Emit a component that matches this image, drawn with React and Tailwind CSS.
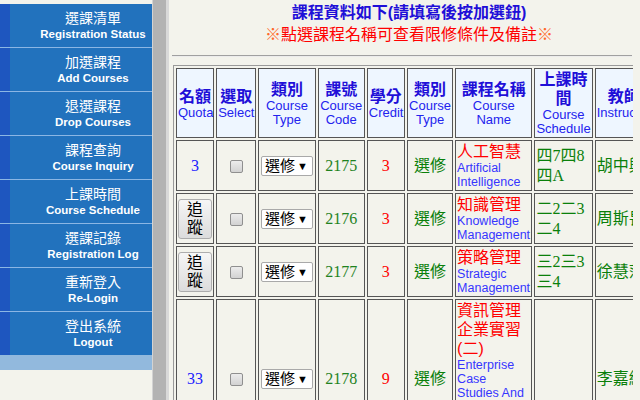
import React from 'react';

const menu = [
  ['選課清單', 'Registration Status'],
  ['加選課程', 'Add Courses'],
  ['退選課程', 'Drop Courses'],
  ['課程查詢', 'Course Inquiry'],
  ['上課時間', 'Course Schedule'],
  ['選課記錄', 'Registration Log'],
  ['重新登入', 'Re-Login'],
  ['登出系統', 'Logout'],
];

const heads = [
  { zh: '名額', en: ['Quota'], w: 'w-[38px]' },
  { zh: '選取', en: ['Select'], w: 'w-[40px]' },
  { zh: '類別', en: ['Course', 'Type'], w: 'w-[57px]' },
  { zh: '課號', en: ['Course', 'Code'], w: 'w-[47px]' },
  { zh: '學分', en: ['Credit'], w: 'w-[38px]' },
  { zh: '類別', en: ['Course', 'Type'], w: 'w-[46px]' },
  { zh: '課程名稱', en: ['Course', 'Name'], w: 'w-[77px]' },
  { zh: '上課時間', en: ['Course', 'Schedule'], w: 'w-[58px]' },
  { zh: '教師', en: ['Instructor'], w: 'w-[58px]' },
];

const courses = [
  {
    quota: '3', track: false, code: '2175', credit: '3',
    zh: ['人工智慧'], en: 'Artificial Intelligence',
    time: '四7四8四A', teacher: '胡中興',
  },
  {
    quota: null, track: true, code: '2176', credit: '3',
    zh: ['知識管理'], en: 'Knowledge Management',
    time: '二2二3二4', teacher: '周斯畏',
  },
  {
    quota: null, track: true, code: '2177', credit: '3',
    zh: ['策略管理'], en: 'Strategic Management',
    time: '三2三3三4', teacher: '徐慧萍',
  },
  {
    quota: '33', track: false, code: '2178', credit: '9',
    zh: ['資訊管理', '企業實習', '(二)'], en: 'Enterprise Case Studies And Practice in Information Management (II)',
    time: '', teacher: '李嘉紘',
  },
];

const sans = 'font-["Liberation_Sans","Noto_Sans_CJK_TC",sans-serif]';
const serif = 'font-["Liberation_Serif","Noto_Sans_CJK_TC",serif]';

const td = 'border border-[#555] p-[1px] align-middle';

function Checkbox() {
  return (
    <span className="inline-block h-[13px] w-[13px] rounded-[2px] border border-[#8f8f8f] bg-gradient-to-b from-[#ececec] to-[#d2d2d2] align-middle" />
  );
}

function TypeSelect() {
  return (
    <div className="mx-auto flex h-[20px] w-[52px] items-center rounded-[2px] border border-[#a9a9a9] bg-white pl-[3px] text-[15px] leading-[18px] text-black">
      <span>選修</span>
      <span className="ml-auto mr-[4px] text-[11px]">▼</span>
    </div>
  );
}

function TrackButton() {
  return (
    <div className="mx-auto flex h-[40px] w-[34px] flex-col items-center justify-center rounded-[3px] border border-[#adadad] bg-gradient-to-b from-[#f6f6f6] to-[#dcdcdc] text-[16px] leading-[18px] text-black">
      <span>追</span>
      <span>蹤</span>
    </div>
  );
}

export default function App() {
  return (
    <div className={`flex h-[400px] w-[640px] overflow-hidden bg-[#f3f3ec] ${sans}`}>
      {/* left menu */}
      <div className="flex w-[152px] shrink-0 flex-col pt-[4px]">
        {menu.map(([zh, en], i) => (
          <div
            key={en}
            className={`flex ${i < menu.length - 1 ? 'h-[44px] border-b border-[#8bb6e4]' : 'h-[43px]'}`}
          >
            <div className="w-[10px] bg-[#1e56bf]" />
            <div className="flex flex-1 flex-col items-center justify-center bg-[#2272bd] pl-[24px] text-white">
              <span className="text-[14px] leading-[17px]">{zh}</span>
              <span className="text-[11.5px] font-bold leading-[14px]">{en}</span>
            </div>
          </div>
        ))}
        <div className="h-[15px] bg-[#92b9dd]" />
      </div>

      {/* frame divider */}
      <div className="w-px shrink-0 bg-[#d3d3d3]" />
      <div className="w-[13px] shrink-0 bg-[#b3b3b3]" />
      <div className="w-[3px] shrink-0 bg-[#d9d9d9]" />

      {/* main */}
      <div className="w-[464px] shrink-0 overflow-hidden">
        <div className="w-[480px]">
          <p className="mt-[2px] text-center text-[16px] font-bold leading-[22px] text-[#1f0fd8]">
            課程資料如下(請填寫後按加選鈕)
          </p>
          <p className="text-center text-[16px] leading-[22px] text-[#ff0000]">
            <span className="text-[#ff6a2a]">※</span>點選課程名稱可查看限修條件及備註<span className="text-[#ff6a2a]">※</span>
          </p>
          <div className="ml-[3px] mt-[9px] w-[460px] border-b border-t border-b-[#ececec] border-t-[#a0a0a0]" />

          <table className="ml-[4px] mt-[8px] w-[483px] table-fixed border-separate border-spacing-[2px] border border-[#9a9a9a]">
            <thead>
              <tr>
                {heads.map((h, i) => (
                  <th key={i} className={`${h.w} ${td} bg-[#eef6ff] text-center font-normal`}>
                    <div className="text-[16px] font-bold leading-[19px] text-[#1f0fd8]">{h.zh}</div>
                    {h.en.map((e) => (
                      <div key={e} className="text-[13px] leading-[14px] text-[#2323ee]">{e}</div>
                    ))}
                  </th>
                ))}
              </tr>
            </thead>
            <tbody>
              {courses.map((c) => (
                <tr key={c.code}>
                  <td className={`${td} text-center ${serif} text-[16px] text-[#1a1aff]`}>
                    {c.track ? <TrackButton /> : c.quota}
                  </td>
                  <td className={`${td} text-center`}>
                    <Checkbox />
                  </td>
                  <td className={td}>
                    <TypeSelect />
                  </td>
                  <td className={`${td} text-center ${serif} text-[16px] text-[#1f821f]`}>{c.code}</td>
                  <td className={`${td} text-center ${serif} text-[16px] text-[#ff0000]`}>{c.credit}</td>
                  <td className={`${td} text-center text-[16px] text-[#0a800a]`}>選修</td>
                  <td className={`${td} text-left`}>
                    {c.zh.map((z) => (
                      <div key={z} className="text-[16px] leading-[19px] text-[#ff0000]">{z}</div>
                    ))}
                    <div className="text-[12.5px] leading-[14px] text-[#3636ff]">{c.en}</div>
                  </td>
                  <td className={`${td} text-left ${serif} text-[16px] leading-[20px] text-[#0a800a]`}>{c.time}</td>
                  <td className={`${td} text-left whitespace-nowrap text-[16px] text-[#0a800a]`}>{c.teacher}</td>
                </tr>
              ))}
            </tbody>
          </table>
        </div>
      </div>
    </div>
  );
}
